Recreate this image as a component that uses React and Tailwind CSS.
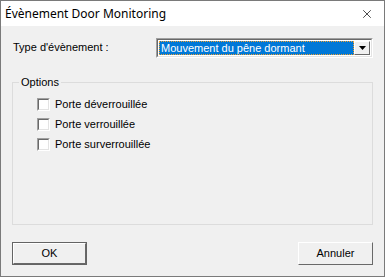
import { X } from 'lucide-react'

const options = ['Porte déverrouillée', 'Porte verrouillée', 'Porte surverrouillée']

function Checkbox({ label }) {
    return (
        <label className="flex items-center h-[20px]">
            <span className="w-[13px] h-[13px] border border-t-[#a0a0a0] border-l-[#a0a0a0] border-b-white border-r-white">
                <span className="block w-full h-full bg-white border border-t-[#696969] border-l-[#696969] border-b-[#e3e3e3] border-r-[#e3e3e3]" />
            </span>
            <span className="ml-[5px]">{label}</span>
        </label>
    )
}

function Button({ children, isDefault }) {
    return (
        <button className={`w-[75px] h-[23px] ${isDefault ? 'border border-[#646464]' : ''}`}>
            <span className="flex items-center justify-center w-full h-full bg-[#f0f0f0] border border-t-white border-l-white border-b-[#696969] border-r-[#696969]">
                {children}
            </span>
        </button>
    )
}

export default function App() {
    return (
        <div className="w-[385px] h-[277px] flex flex-col border border-[#7a7a7a] bg-[#f0f0f0] text-black text-[11px] leading-[13px] font-['Liberation_Sans',Arial,sans-serif]">
            {/* Title bar */}
            <div className="h-[25px] shrink-0 flex items-center justify-between bg-white pl-[4px] pr-[10px]">
                <span className="text-[12px] font-['Noto_Sans',sans-serif]">Évènement Door Monitoring</span>
                <X className="w-[14px] h-[14px]" strokeWidth={1.2} />
            </div>

            <div className="flex flex-col px-[11px]">
                {/* Type row */}
                <div className="flex items-start mt-[12px]">
                    <span className="w-[144px] pt-[3px] pl-[1px]">Type d'évènement :</span>
                    <div className="w-[217px] h-[20px] flex border border-t-[#a0a0a0] border-l-[#a0a0a0] border-b-white border-r-white">
                        <div className="flex-1 flex border border-t-[#696969] border-l-[#696969] border-b-[#e3e3e3] border-r-[#e3e3e3] bg-white p-[1px]">
                            <div className="flex-1 flex items-center bg-[#0078d7] text-white pl-[2px] outline-1 outline-dotted outline-offset-[-1px] outline-[#f0a030]">
                                Mouvement du pêne dormant
                            </div>
                            <div className="w-[16px] flex items-center justify-center bg-[#f0f0f0] border border-t-white border-l-white border-b-[#696969] border-r-[#696969]">
                                <svg width="7" height="4" viewBox="0 0 7 4"><path d="M0 0h7L3.5 4z" fill="#000" /></svg>
                            </div>
                        </div>
                    </div>
                </div>

                {/* Options group */}
                <fieldset className="mt-[18px] h-[149px] border border-[#dcdcdc]">
                    <legend className="ml-[6px] px-[2px]">Options</legend>
                    <div className="pl-[24px] pt-[5px]">
                        {options.map((o) => (
                            <Checkbox key={o} label={o} />
                        ))}
                    </div>
                </fieldset>

                {/* Buttons */}
                <div className="flex justify-between mt-[17px]">
                    <Button isDefault>OK</Button>
                    <Button>Annuler</Button>
                </div>
            </div>
        </div>
    )
}
